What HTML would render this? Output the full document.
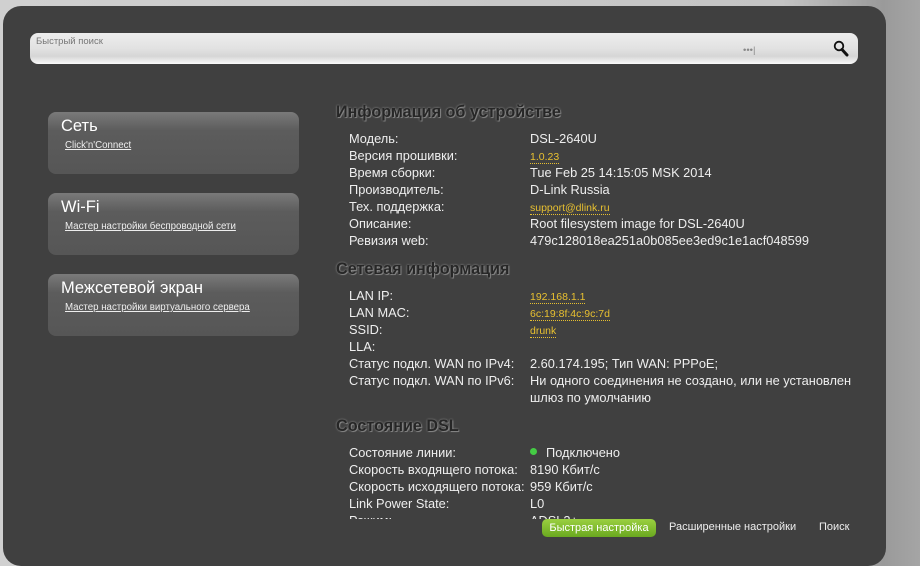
<!DOCTYPE html>
<html><head><meta charset="utf-8"><style>
body{margin:0;width:920px;height:546px;overflow:hidden;background:linear-gradient(90deg,#d0d0d0 0%,#c4c4c4 85%,#9a9a9a 96%,#a5a5a5 100%);font-family:"Liberation Sans",sans-serif;position:relative}
.panel{position:absolute;left:3px;top:6px;width:883px;height:560px;background:#404040;border-radius:18px}
.search{position:absolute;left:30px;top:33px;width:828px;height:31px;border-radius:8px;background:linear-gradient(#ededed,#e2e2e2 50%,#d6d6d6 75%,#fafafa);}
.search span{position:absolute;left:6px;top:3px;font-size:9.5px;color:#777}
.box{position:absolute;left:48px;width:251px;height:62px;border-radius:8px;background:linear-gradient(#7a7a7a,#5c5c5c 30%,#565656)}
.box b{position:absolute;left:13px;top:5px;font-size:16.5px;font-weight:normal;color:#fff}
.box a{position:absolute;left:17px;top:28px;font-size:9.7px;color:#eee;text-decoration:underline}
h2{position:absolute;left:336px;margin:0;font-size:16.2px;font-weight:bold;color:#262626;text-shadow:0 0 2px #999,1px 1px 0 #777}
.r{position:absolute;font-size:12.8px;color:#eee;white-space:nowrap}
.l{left:349px}.v{left:530px}
.y{color:#e8c030;font-size:10.5px;border-bottom:1px dotted #e8c030;}
</style></head><body>
<div class="panel"></div>
<div class="search"><span>Быстрый поиск</span>
<span style="left:713px;top:12px;color:#888">•••|</span>
<svg style="position:absolute;left:803px;top:7px" width="16" height="17"><circle cx="6" cy="6" r="4.3" fill="none" stroke="#111" stroke-width="1.8"/><line x1="9" y1="9.5" x2="14" y2="15" stroke="#111" stroke-width="3" stroke-linecap="round"/></svg></div>
<div class="box" style="top:112px"><b>Сеть</b><a>Click'n'Connect</a></div>
<div class="box" style="top:193px"><b>Wi-Fi</b><a>Мастер настройки беспроводной сети</a></div>
<div class="box" style="top:274px"><b>Межсетевой экран</b><a>Мастер настройки виртуального сервера</a></div>
<h2 style="top:103px">Информация об устройстве</h2>
<div class="r l" style="top:131px">Модель:</div><div class="r v" style="top:131px">DSL-2640U</div>
<div class="r l" style="top:148px">Версия прошивки:</div><div class="r v" style="top:148px"><span class="y">1.0.23</span></div>
<div class="r l" style="top:165px">Время сборки:</div><div class="r v" style="top:165px">Tue Feb 25 14:15:05 MSK 2014</div>
<div class="r l" style="top:182px">Производитель:</div><div class="r v" style="top:182px">D-Link Russia</div>
<div class="r l" style="top:199px">Тех. поддержка:</div><div class="r v" style="top:199px"><span class="y">support@dlink.ru</span></div>
<div class="r l" style="top:216px">Описание:</div><div class="r v" style="top:216px">Root filesystem image for DSL-2640U</div>
<div class="r l" style="top:233px">Ревизия web:</div><div class="r v" style="top:233px">479c128018ea251a0b085ee3ed9c1e1acf048599</div>
<h2 style="top:260px">Сетевая информация</h2>
<div class="r l" style="top:288px">LAN IP:</div><div class="r v" style="top:288px"><span class="y">192.168.1.1</span></div>
<div class="r l" style="top:305px">LAN MAC:</div><div class="r v" style="top:305px"><span class="y">6c:19:8f:4c:9c:7d</span></div>
<div class="r l" style="top:322px">SSID:</div><div class="r v" style="top:322px"><span class="y">drunk</span></div>
<div class="r l" style="top:339px">LLA:</div>
<div class="r l" style="top:356px">Статус подкл. WAN по IPv4:</div><div class="r v" style="top:356px">2.60.174.195; Тип WAN: PPPoE;</div>
<div class="r l" style="top:373px">Статус подкл. WAN по IPv6:</div><div class="r v" style="top:373px">Ни одного соединения не создано, или не установлен</div>
<div class="r v" style="top:390px">шлюз по умолчанию</div>
<h2 style="top:417px">Состояние DSL</h2>
<div class="r l" style="top:445px">Состояние линии:</div><div class="r v" style="top:445px"><span style="display:inline-block;width:7px;height:7px;border-radius:50%;background:#4c4;margin-right:9px;vertical-align:2px"></span>Подключено</div>
<div class="r l" style="top:462px">Скорость входящего потока:</div><div class="r v" style="top:462px">8190 Кбит/с</div>
<div class="r l" style="top:479px">Скорость исходящего потока:</div><div class="r v" style="top:479px">959 Кбит/с</div>
<div class="r l" style="top:496px">Link Power State:</div><div class="r v" style="top:496px">L0</div>
<div class="r l" style="top:513px;height:6px;overflow:hidden">Режим:</div><div class="r v" style="top:513px;height:6px;overflow:hidden">ADSL2+</div>
<div style="position:absolute;left:542px;top:519px;width:114px;height:18px;border-radius:5px;background:linear-gradient(#9ad040,#6aa820);color:#fff;font-size:11px;text-align:center;line-height:18px">Быстрая настройка</div>
<div class="r" style="left:669px;top:521px;font-size:11px">Расширенные настройки</div>
<div class="r" style="left:819px;top:521px;font-size:11px">Поиск</div>
</body></html>
